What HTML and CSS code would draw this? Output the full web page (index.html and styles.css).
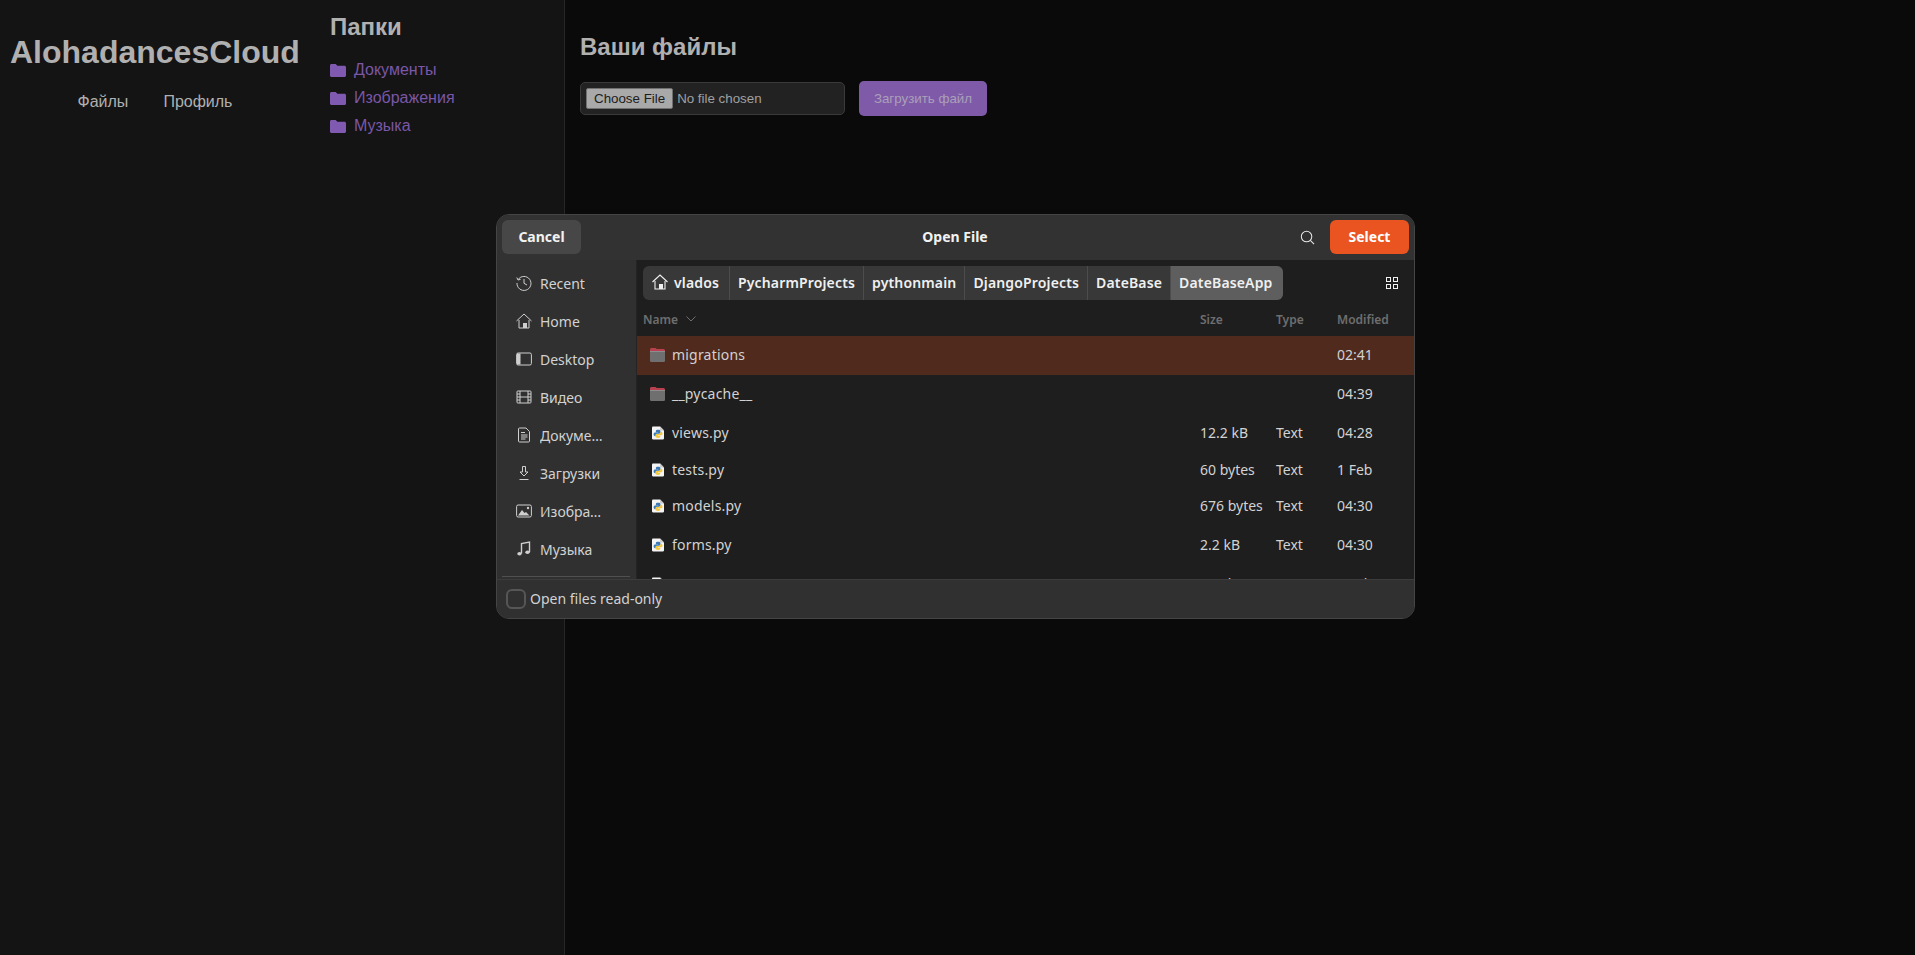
FILE: index.html
```html
<!DOCTYPE html>
<html lang="en">

<head>
    <meta charset="UTF-8">
    <meta name="viewport" content="width=device-width, initial-scale=1.0">
    <title>AlohadancesCloud</title>
    <link rel="stylesheet" href="styles.css">
</head>

<body>

    <svg class="sprites" width="0" height="0">
        <symbol id="web-folder" viewBox="0 0 16 13">
            <path d="M1.5 0h4.2l1.6 1.8h7.2c.8 0 1.5.7 1.5 1.5v8.2c0 .8-.7 1.5-1.5 1.5h-13C.7 13 0 12.3 0 11.500V1.500C0 .7.700 0 1.500 0z" fill="currentColor" />
        </symbol>
        <symbol id="dir" viewBox="0 0 15 14">
            <path d="M1.500 0h4l1.200 1h6.800c.8 0 1.500.7 1.500 1.500V5H0V1.500C0 .7.700 0 1.500 0z" fill="#b8404f" />
            <rect y="3" width="15" height="11" rx="1.200" fill="#6f6f6f" />
            <rect y="3" width="15" height="1" fill="#8d8d8d" />
        </symbol>
        <symbol id="py" viewBox="0 0 14 15">
            <path d="M1 0h8.500L14 4.500V14c0 .6-.4 1-1 1H1c-.6 0-1-.4-1-1V1c0-.6.4-1 1-1z" fill="#f4f4f4" />
            <path d="M9.500 0L14 4.500H10.500c-.6 0-1-.4-1-1z" fill="#c8c8c8" />
            <path d="M7 3.800c-1.700 0-2.500.6-2.500 1.600v1.100H7.200v.5H3.600c-1 0-1.700.8-1.700 2.100s.6 2.100 1.500 2.100h.9V10c0-1 .8-1.700 1.800-1.700h2.400c.8 0 1.400-.6 1.400-1.400V5.400c0-1-.9-1.600-2.900-1.600z" fill="#3d7ab5" />
            <path d="M7.100 13.300c1.700 0 2.500-.6 2.500-1.600v-1.100H6.900v-.5h3.600c1 0 1.700-.8 1.700-2.100s-.6-2.100-1.500-2.100h-.9V7c0 1-.8 1.700-1.800 1.700H5.600c-.8 0-1.400.6-1.400 1.400v1.600c0 1 .9 1.600 2.900 1.600z" fill="#f5c93c" />
        </symbol>
    </svg>

    <div class="page">
        <aside class="side">
            <div class="brand">
                <h1>AlohadancesCloud</h1>
                <nav class="top-nav">
                    <a href="#">Файлы</a>
                    <a href="#">Профиль</a>
                </nav>
            </div>
            <div class="folders">
                <h2>Папки</h2>
                <ul>
                    <li><svg class="folder-icon"><use href="#web-folder" /></svg><a href="#">Документы</a></li>
                    <li><svg class="folder-icon"><use href="#web-folder" /></svg><a href="#">Изображения</a></li>
                    <li><svg class="folder-icon"><use href="#web-folder" /></svg><a href="#">Музыка</a></li>
                </ul>
            </div>
        </aside>

        <main class="content">
            <h2>Ваши файлы</h2>
            <form class="upload">
                <input class="file-input" type="file">
                <button class="upload-btn" type="button">Загрузить файл</button>
            </form>
        </main>
    </div>

    <!-- GTK file chooser on top of the page -->
    <div class="dialog">
        <header class="dialog-head">
            <button class="head-btn" type="button">Cancel</button>
            <div class="dialog-title">Open File</div>
            <svg class="search-icon" viewBox="0 0 16 16" fill="none" stroke="#e8e8e8" stroke-width="1.100">
                <circle cx="7" cy="7" r="5.600" />
                <path d="M11 11l4 4" />
            </svg>
            <button class="head-btn select-btn" type="button">Select</button>
        </header>

        <div class="dialog-body">
            <ul class="places">
                <li>
                    <svg viewBox="0 0 16 16" fill="none" stroke="#cfcfcf" stroke-width="1">
                        <path d="M2.200 4.500A7 7 0 1 1 1 8" />
                        <path d="M.8 2.500l1.200 2.500 2.600-.7" />
                        <path d="M8 4v4.300l3 1.700" />
                    </svg>
                    <span>Recent</span>
                </li>
                <li>
                    <svg viewBox="0 0 16 16" fill="none" stroke="#cfcfcf" stroke-width="1">
                        <path d="M.5 8L8 1l7.500 7" />
                        <path d="M3 7v8h10V7" />
                        <rect x="7" y="10" width="4" height="5" fill="#cfcfcf" stroke="none" />
                    </svg>
                    <span>Home</span>
                </li>
                <li>
                    <svg viewBox="0 0 16 16" fill="none" stroke="#cfcfcf" stroke-width="1">
                        <rect x=".6" y="2" width="14.800" height="12" rx="1.500" />
                        <path d="M1 2.500h3.500v11H1z" fill="#cfcfcf" stroke="none" />
                    </svg>
                    <span>Desktop</span>
                </li>
                <li>
                    <svg viewBox="0 0 16 16" fill="none" stroke="#cfcfcf" stroke-width="1">
                        <rect x="1" y="2" width="14" height="12" rx=".8" />
                        <path d="M4 2v12M12 2v12M4 8h8M1 5h3M1 8h3M1 11h3M12 5h3M12 8h3M12 11h3" />
                    </svg>
                    <span>Видео</span>
                </li>
                <li>
                    <svg viewBox="0 0 16 16" fill="none" stroke="#cfcfcf" stroke-width="1">
                        <path d="M3.500 1h6.500l3.500 3.500V14c0 .6-.4 1-1 1h-9c-.6 0-1-.4-1-1V2c0-.6.4-1 1-1z" />
                        <path d="M5 5.500h4M5 8h6.500M5 10h6.500M5 12h4.500" />
                    </svg>
                    <span>Документы</span>
                </li>
                <li>
                    <svg viewBox="0 0 16 16" fill="none" stroke="#cfcfcf" stroke-width="1">
                        <path d="M6.500 1.500h3v5.500h2.500L8 11 4 7h2.500z" />
                        <path d="M3.500 14.500h9" />
                    </svg>
                    <span>Загрузки</span>
                </li>
                <li>
                    <svg viewBox="0 0 16 16" fill="none" stroke="#cfcfcf" stroke-width="1">
                        <rect x=".6" y="2" width="14.800" height="12" rx="1.500" />
                        <path d="M2 12.500L6 7l2.500 3 1.500-1 3.500 3.500z" fill="#cfcfcf" stroke="none" />
                        <circle cx="12" cy="5" r="1.200" fill="#cfcfcf" stroke="none" />
                    </svg>
                    <span>Изображения</span>
                </li>
                <li>
                    <svg viewBox="0 0 16 16" fill="none" stroke="#cfcfcf" stroke-width="1.400">
                        <path d="M5.500 12.500V2.500l8-1.500v10" />
                        <ellipse cx="3.500" cy="12.800" rx="2.200" ry="1.800" fill="#cfcfcf" stroke="none" />
                        <ellipse cx="11.500" cy="11.300" rx="2.200" ry="1.800" fill="#cfcfcf" stroke="none" />
                    </svg>
                    <span>Музыка</span>
                </li>
            </ul>

            <section class="browser">
                <div class="path-row">
                    <div class="pathbar">
                        <div class="crumb crumb-home">
                            <svg viewBox="0 0 16 16" fill="none" stroke="#f0f0f0" stroke-width="1.100">
                                <path d="M.5 8L8 1l7.500 7" />
                                <path d="M3 7v8h10V7" />
                                <rect x="7" y="10" width="4" height="5" fill="#f0f0f0" stroke="none" />
                            </svg>
                            vlados
                        </div>
                        <div class="crumb">PycharmProjects</div>
                        <div class="crumb">pythonmain</div>
                        <div class="crumb">DjangoProjects</div>
                        <div class="crumb">DateBase</div>
                        <div class="crumb crumb-active">DateBaseApp</div>
                    </div>
                    <svg class="grid-icon" viewBox="0 0 12 12" fill="none" stroke="#f0f0f0" stroke-width="1">
                        <rect x=".5" y=".5" width="4" height="4" />
                        <rect x="7.500" y=".5" width="4" height="4" />
                        <rect x=".5" y="7.500" width="4" height="4" />
                        <rect x="7.500" y="7.500" width="4" height="4" />
                    </svg>
                </div>

                <div class="file-head">
                    <div class="col-name">Name
                        <svg class="sort-icon" viewBox="0 0 10 6" fill="none" stroke="#6e6e6e" stroke-width="1">
                            <path d="M.5.5L5 5l4.500-4.500" />
                        </svg>
                    </div>
                    <div class="col-size">Size</div>
                    <div class="col-type">Type</div>
                    <div class="col-date">Modified</div>
                </div>

                <div class="file-list">
                    <div class="file-row row-selected row-up">
                        <div class="col-name"><svg class="dir-icon"><use href="#dir" /></svg>migrations</div>
                        <div class="col-size"></div>
                        <div class="col-type"></div>
                        <div class="col-date">02:41</div>
                    </div>
                    <div class="file-row row-up">
                        <div class="col-name"><svg class="dir-icon"><use href="#dir" /></svg>__pycache__</div>
                        <div class="col-size"></div>
                        <div class="col-type"></div>
                        <div class="col-date">04:39</div>
                    </div>
                    <div class="file-row row-short">
                        <div class="col-name"><svg class="py-icon"><use href="#py" /></svg>views.py</div>
                        <div class="col-size">12.2 kB</div>
                        <div class="col-type">Text</div>
                        <div class="col-date">04:28</div>
                    </div>
                    <div class="file-row row-short">
                        <div class="col-name"><svg class="py-icon"><use href="#py" /></svg>tests.py</div>
                        <div class="col-size">60 bytes</div>
                        <div class="col-type">Text</div>
                        <div class="col-date">1 Feb</div>
                    </div>
                    <div class="file-row row-short row-up">
                        <div class="col-name"><svg class="py-icon"><use href="#py" /></svg>models.py</div>
                        <div class="col-size">676 bytes</div>
                        <div class="col-type">Text</div>
                        <div class="col-date">04:30</div>
                    </div>
                    <div class="file-row">
                        <div class="col-name"><svg class="py-icon"><use href="#py" /></svg>forms.py</div>
                        <div class="col-size">2.2 kB</div>
                        <div class="col-type">Text</div>
                        <div class="col-date">04:30</div>
                    </div>
                    <div class="file-row">
                        <div class="col-name"><svg class="py-icon"><use href="#py" /></svg>apps.py</div>
                        <div class="col-size">151 bytes</div>
                        <div class="col-type">Text</div>
                        <div class="col-date">1 Feb</div>
                    </div>
                </div>
            </section>
        </div>

        <footer class="dialog-foot">
            <span class="check"></span>
            <span>Open files read-only</span>
        </footer>
    </div>

</body>

</html>
```

FILE: styles.css
```css
/* Resetting some default styles */
* {
    margin: 0;
    padding: 0;
    box-sizing: border-box;
}

body {
    font-family: 'Liberation Sans', Arial, sans-serif;
    background-color: #0a0a0a;
    color: #b0b0b0;
    height: 955px;
    overflow: hidden;
}

ul {
    list-style: none;
}

a {
    text-decoration: none;
    color: inherit;
}

.sprites {
    position: absolute;
}

.page {
    display: flex;
    height: 955px;
}

/* Left column */
.side {
    width: 565px;
    display: flex;
    gap: 30px;
    padding: 0 10px;
    background-color: #141414;
    border-right: 1px solid #262626;
}

.brand {
    width: 290px;
    padding-top: 34px;
}

.brand h1 {
    font-size: 32px;
    line-height: 37px;
    color: #b0b0b0;
}

.top-nav {
    display: flex;
    justify-content: center;
    gap: 35px;
    margin-top: 22px;
    font-size: 16px;
    line-height: 18px;
}

.folders {
    padding-top: 13px;
}

.folders h2 {
    font-size: 24px;
    line-height: 28px;
    margin-bottom: 15px;
}

.folders li {
    display: flex;
    align-items: center;
    height: 28px;
    font-size: 16px;
    color: #7a57a8;
}

.folder-icon {
    width: 16px;
    height: 13px;
    margin-right: 8px;
    color: #7f5ab0;
}

/* Main column */
.content {
    flex: 1;
    padding: 33px 15px 0 15px;
}

.content h2 {
    font-size: 24px;
    line-height: 28px;
    margin-bottom: 20px;
}

.upload {
    display: flex;
    align-items: center;
    gap: 14px;
}

.file-input {
    width: 265px;
    height: 33px;
    padding: 5px;
    font-family: 'Liberation Sans', Arial, sans-serif;
    font-size: 13.333px;
    color: #a0a0a0;
    background-color: #222;
    border: 1px solid #3a3a3a;
    border-radius: 5px;
}

.file-input::file-selector-button {
    padding: 2px 7px;
    color: #1c1c1c;
    background-color: #a9a9a9;
    border: 1px solid #707070;
    border-radius: 2px;
}

.upload-btn {
    width: 128px;
    height: 35px;
    font-family: 'Liberation Sans', Arial, sans-serif;
    font-size: 13.333px;
    color: #aaa0b8;
    background-color: #7f5aa8;
    border: none;
    border-radius: 5px;
}

/* File chooser dialog */
.dialog {
    position: absolute;
    left: 496px;
    top: 214px;
    width: 919px;
    height: 405px;
    display: flex;
    flex-direction: column;
    overflow: hidden;
    font-family: 'Noto Sans', sans-serif;
    font-size: 14px;
    color: #d2d2d2;
    background-color: #1e1e1e;
    border: 1px solid #454545;
    border-radius: 13px;
}

.dialog-head {
    display: flex;
    align-items: center;
    height: 45px;
    flex-shrink: 0;
    padding: 0 5px 1px;
    background-color: #323232;
}

.head-btn {
    width: 79px;
    height: 34px;
    padding-bottom: 2px;
    font-family: 'Noto Sans', sans-serif;
    font-size: 14px;
    font-weight: 700;
    color: #f2f2f2;
    background-color: #474747;
    border: none;
    border-radius: 6px;
}

.select-btn {
    background-color: #e95420;
    color: #fff;
}

.dialog-title {
    flex: 1;
    padding: 0 0 2px 29px;
    text-align: center;
    font-weight: 700;
    color: #f2f2f2;
}

.search-icon {
    width: 15px;
    height: 15px;
    margin-right: 15px;
}

.dialog-body {
    flex: 1;
    display: flex;
    min-height: 0;
}

.places {
    width: 140px;
    flex-shrink: 0;
    padding-top: 4px;
    background-color: #303030;
    border-right: 1px solid #242424;
    position: relative;
}

.places::after {
    content: "";
    position: absolute;
    left: 5px;
    right: 6px;
    top: 316px;
    height: 1px;
    background-color: #505050;
}

.places li {
    display: flex;
    align-items: center;
    height: 38px;
    padding-left: 19px;
}

.places svg {
    width: 16px;
    height: 16px;
    margin-right: 8px;
    flex-shrink: 0;
}

.places span {
    width: 68px;
    overflow: hidden;
    white-space: nowrap;
    text-overflow: ellipsis;
}

.browser {
    flex: 1;
    min-width: 0;
    display: flex;
    flex-direction: column;
}

.path-row {
    display: flex;
    align-items: center;
    justify-content: space-between;
    height: 40px;
    padding: 6px 16px 0 6px;
    flex-shrink: 0;
}

.pathbar {
    display: flex;
    height: 34px;
    font-weight: 600;
    letter-spacing: .15px;
    color: #f0f0f0;
    background-color: #383838;
    border-radius: 6px;
    overflow: hidden;
}

.crumb {
    display: flex;
    align-items: center;
    padding: 0 8px 2px;
    border-right: 1px solid #4c4c4c;
    white-space: nowrap;
}

.crumb-home {
    padding: 0 10px 2px 9px;
}

.crumb-home svg {
    width: 16px;
    height: 16px;
    margin-right: 6px;
}

.crumb-active {
    padding-right: 10px;
    background-color: #5e5e5e;
    border-right: none;
}

.grid-icon {
    width: 12px;
    height: 12px;
}

.file-head,
.file-row {
    display: flex;
    align-items: center;
}

.file-head {
    height: 36px;
    padding-top: 2px;
    font-size: 12px;
    font-weight: 600;
    color: #6e6e6e;
    flex-shrink: 0;
}

.file-head .col-name {
    padding-left: 6px;
    letter-spacing: 0;
}

.sort-icon {
    width: 10px;
    height: 6px;
    margin-left: 8px;
}

.col-name {
    display: flex;
    align-items: center;
    width: 563px;
    padding-left: 13px;
    letter-spacing: .2px;
}

.col-size {
    width: 76px;
}

.col-type {
    width: 61px;
}

.file-list {
    flex: 1;
    min-height: 0;
    overflow: hidden;
}

.file-row {
    height: 39px;
}

.row-short {
    height: 37px;
}

.row-up {
    padding-bottom: 2px;
}

.row-selected {
    background-color: #512a1e;
}

.dir-icon {
    width: 15px;
    height: 14px;
    margin-right: 7px;
}

.py-icon {
    width: 12px;
    height: 14px;
    margin: 0 8px 0 2px;
}

.dialog-foot {
    display: flex;
    align-items: center;
    gap: 4px;
    height: 39px;
    flex-shrink: 0;
    padding: 0 0 1px 9px;
    background-color: #303030;
    border-top: 1px solid #3c3c3c;
}

.check {
    width: 20px;
    height: 20px;
    border: 2px solid #565656;
    border-radius: 6px;
}
```
